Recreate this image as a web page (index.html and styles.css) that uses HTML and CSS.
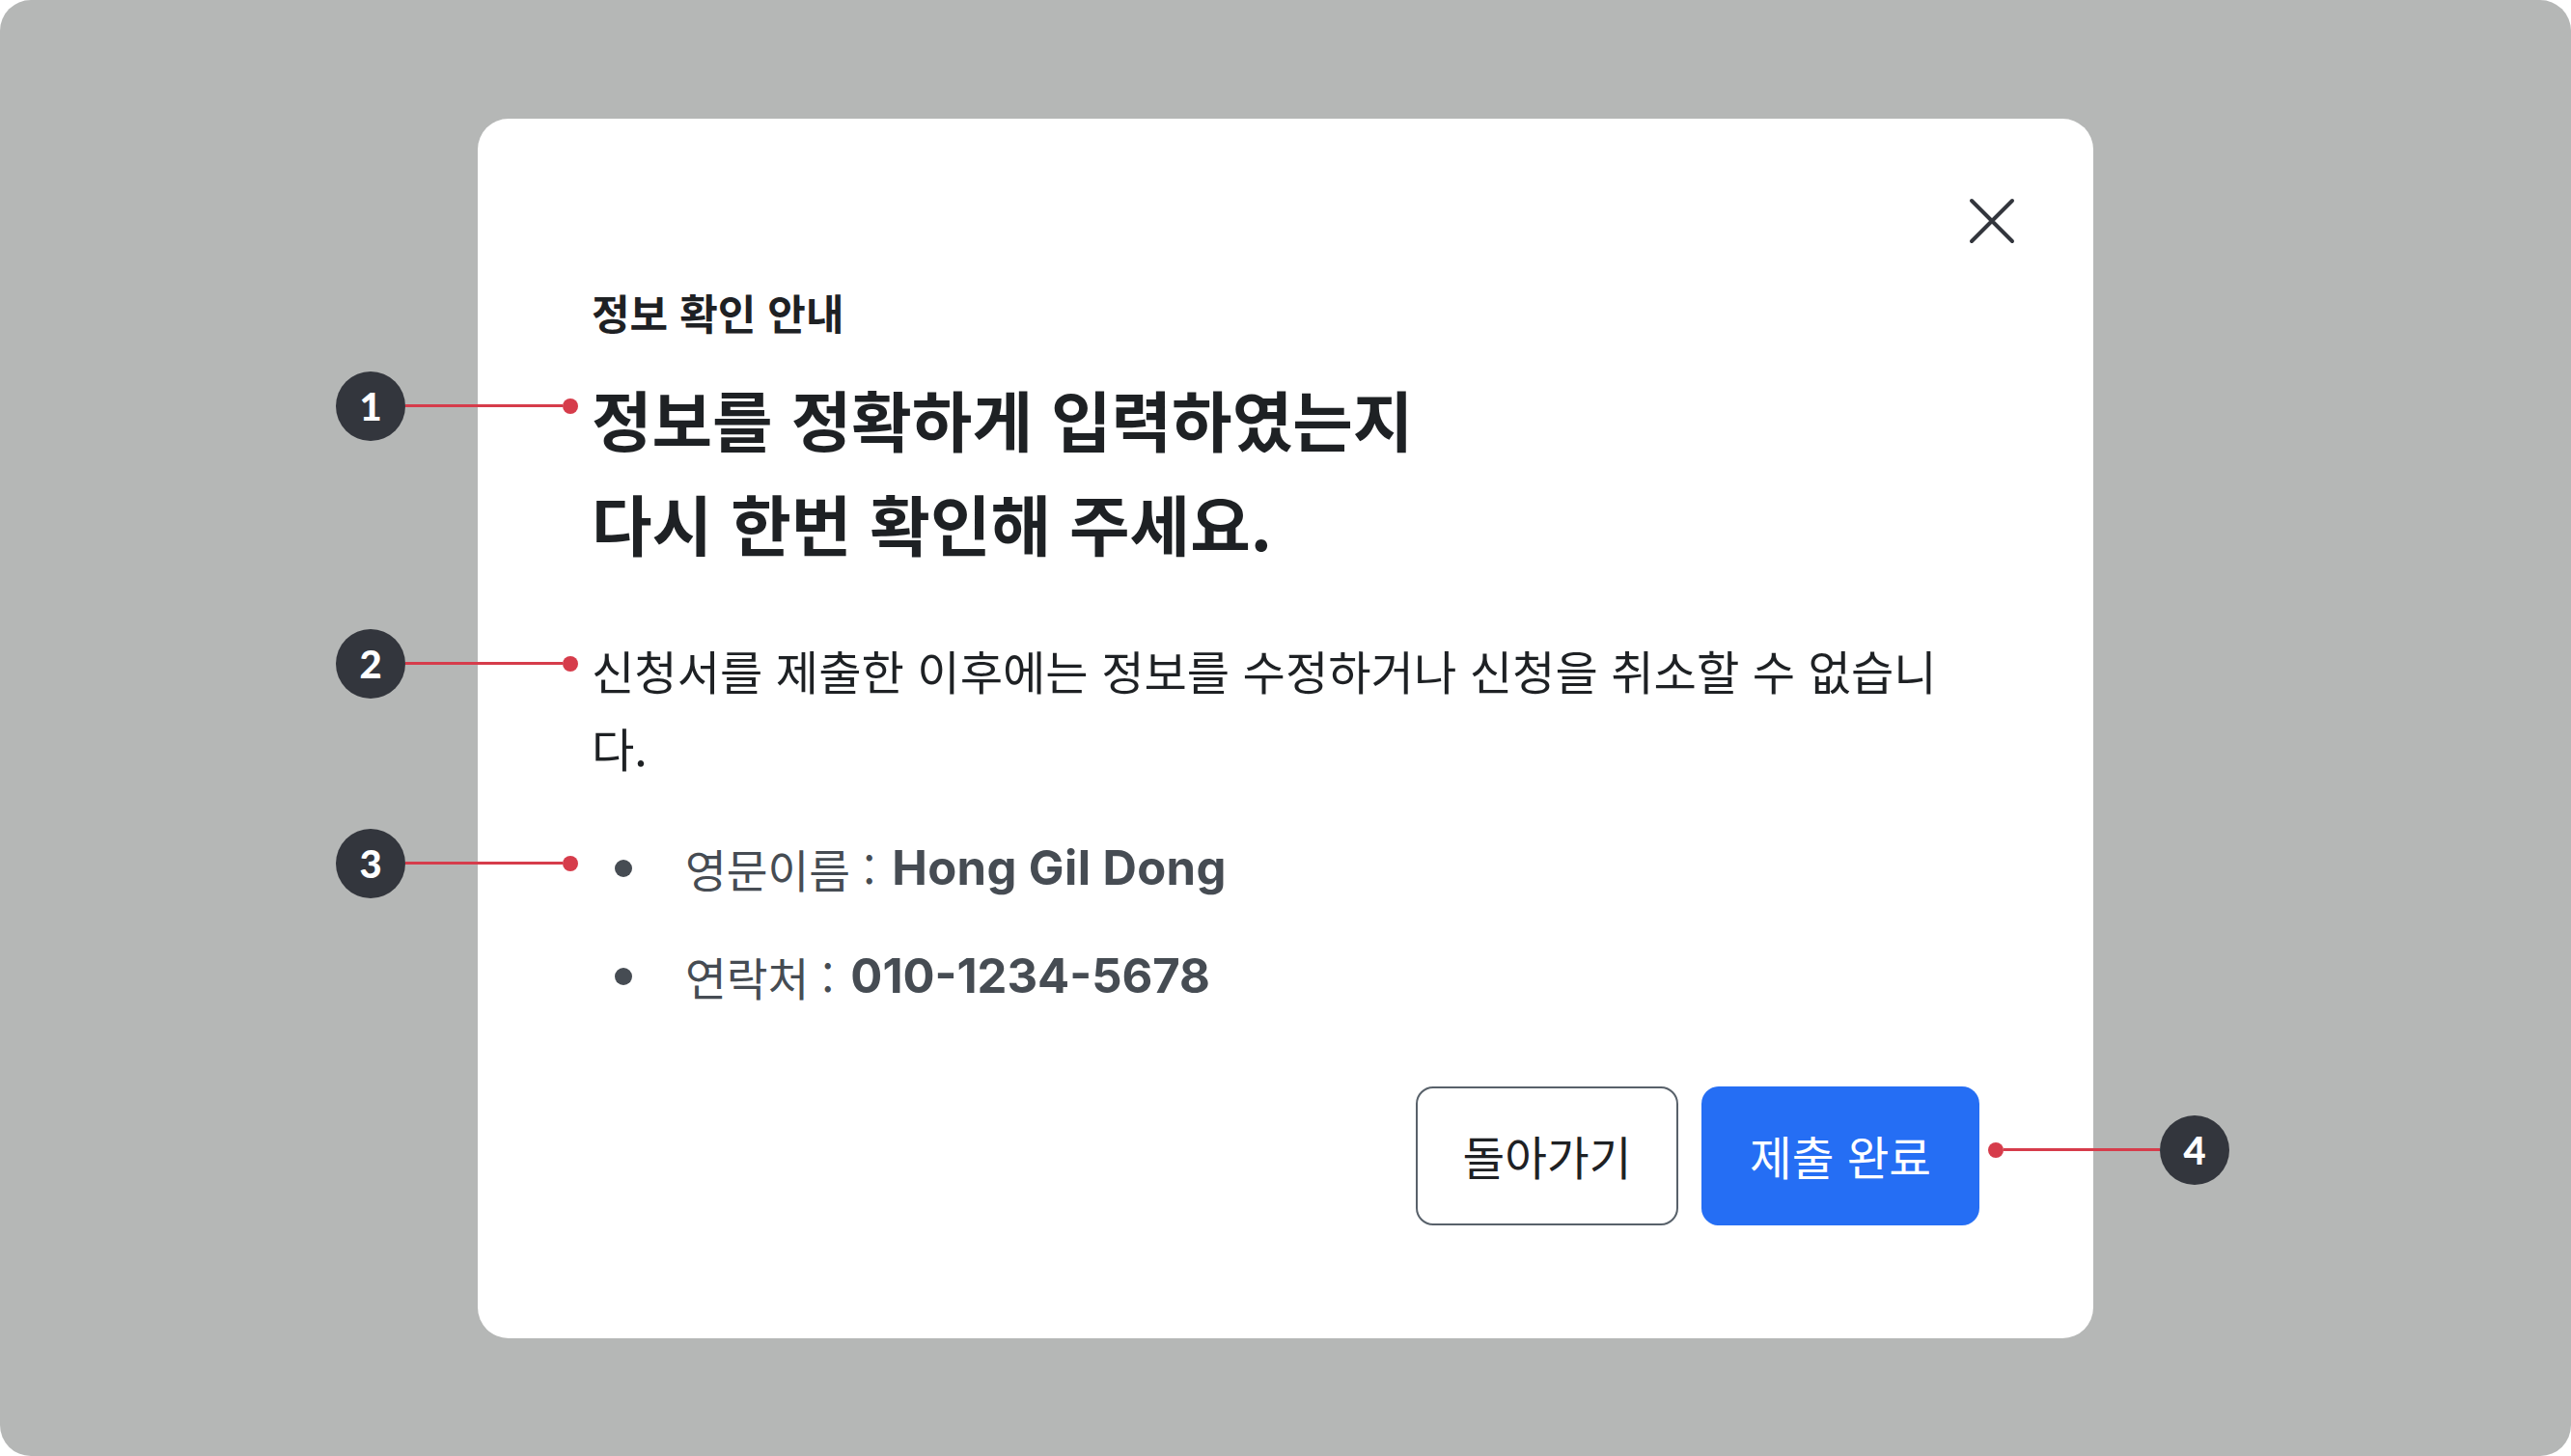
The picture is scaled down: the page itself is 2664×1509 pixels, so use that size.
FILE: index.html
```html
<!DOCTYPE html>
<html lang="ko">
<head>
<meta charset="utf-8">
<title>정보 확인 안내</title>
<link rel="stylesheet" href="styles.css">
</head>
<body>
<div class="page">
  <div class="dialog" role="dialog" aria-labelledby="dlg-title">
    <div class="dialog-head">
      <button class="close" type="button" aria-label="닫기">
        <svg width="48" height="48" viewBox="0 0 48 48" aria-hidden="true">
          <path d="M3 3 L45 45 M45 3 L3 45" fill="none" stroke="#33363d" stroke-width="4" stroke-linecap="round"/>
        </svg>
      </button>
    </div>
    <p class="eyebrow">정보 확인 안내</p>
    <h2 class="title" id="dlg-title">정보를 정확하게 입력하였는지<br>다시 한번 확인해 주세요.</h2>
    <p class="desc">신청서를 제출한 이후에는 정보를 수정하거나 신청을 취소할 수 없습니다.</p>
    <ul class="info">
      <li class="info-item"><span class="bullet"></span><span class="label">영문이름 :</span><strong class="value value-name">Hong Gil Dong</strong></li>
      <li class="info-item"><span class="bullet"></span><span class="label">연락처 :</span><strong class="value">010-1234-5678</strong></li>
    </ul>
    <div class="actions">
      <button class="btn btn-outline" type="button">돌아가기</button>
      <button class="btn btn-primary" type="button">제출 완료</button>
    </div>

    <div class="marker marker-1"><span class="num">1</span><span class="wire"></span><span class="dot"></span></div>
    <div class="marker marker-2"><span class="num">2</span><span class="wire"></span><span class="dot"></span></div>
    <div class="marker marker-3"><span class="num">3</span><span class="wire"></span><span class="dot"></span></div>
    <div class="marker marker-4"><span class="dot"></span><span class="wire"></span><span class="num">4</span></div>
  </div>
</div>
</body>
</html>
```
FILE: styles.css
```css
* { box-sizing: border-box; }

html, body {
  margin: 0;
  padding: 0;
  background: #ffffff;
}

body {
  font-family: "Noto Sans CJK KR", "Noto Sans", sans-serif;
  color: #1e2124;
}

.page {
  width: 2664px;
  height: 1509px;
  background: #b5b7b6;
  border-radius: 32px;
  display: flex;
  align-items: center;
  justify-content: center;
}

.dialog {
  position: relative;
  width: 1674px;
  background: #ffffff;
  border-radius: 32px;
  padding: 82px 118px 117px 118px;
  display: flex;
  flex-direction: column;
}

.dialog-head {
  display: flex;
  justify-content: flex-end;
  margin-right: -37px;
  height: 48px;
}

.close {
  width: 48px;
  height: 48px;
  padding: 0;
  border: 0;
  background: transparent;
  display: block;
}

.close svg { display: block; }

.eyebrow {
  margin: 40px 0 0;
  font-size: 43px;
  line-height: 60px;
  font-weight: 700;
  color: #1e2124;
}

.title {
  margin: 27px 0 0;
  font-size: 68px;
  line-height: 108px;
  font-weight: 700;
  color: #1e2124;
}

.desc {
  margin: 58px 0 0;
  max-width: 1412px;
  font-size: 48.2px;
  line-height: 80px;
  font-weight: 400;
  color: #1e2124;
}

.info {
  list-style: none;
  margin: 54px 0 0;
  padding: 0 0 0 24px;
  display: flex;
  flex-direction: column;
  gap: 48px;
}

.info-item {
  display: flex;
  align-items: center;
  height: 64px;
  font-size: 46.5px;
  line-height: 64px;
  color: #464c53;
}

.bullet {
  width: 18px;
  height: 18px;
  border-radius: 50%;
  background: #464c53;
  margin-right: 55px;
  flex: none;
}

.label {
  white-space: pre;
  margin-right: 17px;
}

.value {
  font-family: Inter, "Noto Sans", sans-serif;
  font-weight: 700;
  font-size: 49px;
  color: #464c53;
}

.value-name {
  letter-spacing: 0.4px;
}

.actions {
  margin-top: 82px;
  display: flex;
  justify-content: flex-end;
  gap: 24px;
}

.btn {
  height: 144px;
  padding: 0;
  border-radius: 18px;
  font-family: "Noto Sans CJK KR", sans-serif;
  font-size: 47.5px;
  font-weight: 400;
  display: flex;
  align-items: center;
  justify-content: center;
}

.btn-outline {
  width: 272px;
  background: #ffffff;
  border: 2px solid #58616a;
  color: #1e2124;
}

.btn-primary {
  width: 288px;
  background: #256ef4;
  border: 0;
  color: #ffffff;
}

/* annotation markers */
.marker {
  position: absolute;
  display: flex;
  align-items: center;
  height: 72px;
}

.marker .num {
  width: 72px;
  height: 72px;
  border-radius: 50%;
  background: #33363d;
  color: #ffffff;
  font-family: Lato, "Liberation Sans", sans-serif;
  font-weight: 900;
  font-size: 40px;
  display: flex;
  align-items: center;
  justify-content: center;
  flex: none;
}

.marker .wire {
  width: 163px;
  height: 3px;
  background: #d63c4b;
  flex: none;
}

.marker .dot {
  width: 16px;
  height: 16px;
  border-radius: 50%;
  background: #d63c4b;
  flex: none;
}

.marker-1 { left: -147px; top: 262px; }
.marker-2 { left: -147px; top: 529px; }
.marker-3 { left: -147px; top: 736px; }
.marker-4 { left: 1565px; top: 1033px; }
.marker-4 .wire { width: 162px; }
```
